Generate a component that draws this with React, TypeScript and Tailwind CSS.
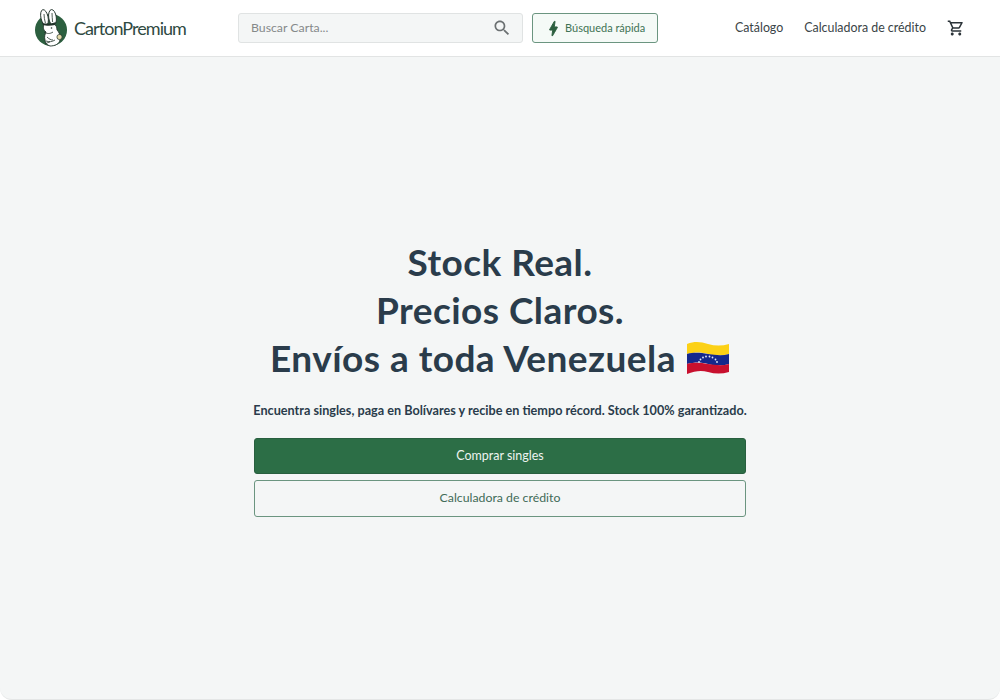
function Logo() {
  return (
    <svg width="34" height="38" viewBox="0 0 34 38" className="shrink-0">
      <circle cx="17" cy="21" r="16" fill="#2c5f3f" />
      <ellipse cx="10.5" cy="8.5" rx="3.6" ry="8" transform="rotate(-12 10.5 8.5)" fill="#fff" stroke="#22332b" strokeWidth="0.9" />
      <ellipse cx="18.5" cy="8.5" rx="3.8" ry="8" transform="rotate(-8 18.5 8.5)" fill="#fff" stroke="#22332b" strokeWidth="0.9" />
      <path d="M10 5c0 3 .6 6 1.4 9M18 4c0 3 .4 6 .6 9" stroke="#22332b" strokeWidth="0.8" fill="none" />
      <path d="M10 15c-1 3-1 6 2 8-1 2-2 5-1 8 0 3 2 5 5 6 5 0 9-2 10-6 1-4-1-8-3-10 0-3-1-5-3-6Z" fill="#fff" stroke="#22332b" strokeWidth="0.9" />
      <path d="M8 14c4 2 9 1 14-1l-1 3c-4 1-9 1-12 0Z" fill="#22332b" />
      <circle cx="17.5" cy="19" r="0.8" fill="#22332b" />
      <path d="M10 23c3 2 6 2 9 0M12 32c3 1 6 1 9-1M13 28c2 2 4 3 6 3M11 35c2-1 4-2 5-2" stroke="#22332b" strokeWidth="0.8" fill="none" />
      <circle cx="25.5" cy="28" r="2.6" fill="#e4d9a8" stroke="#22332b" strokeWidth="0.7" />
    </svg>
  );
}

function Flag() {
  return (
    <svg width="44" height="33" viewBox="0 0 44 33" className="shrink-0">
      <path d="M1 2c8-3 14-2 21 0s14 2 21 0v10c-7 2-14 2-21 0S9 10 1 12Z" fill="#fcd116" />
      <path d="M1 12c8-2 14-1 21 0s14 2 21 0v10c-7 2-14 2-21 0S9 20 1 22Z" fill="#14288c" />
      <path d="M1 22c8-2 14-1 21 0s14 2 21 0v8c-7 2-14 2-21 0S9 29 1 32Z" fill="#c8102e" />
      {[[13,20],[14.5,17.5],[17,15.5],[20,14.5],[23.5,14.5],[26.5,15.5],[29.5,17.5],[31,20]].map(([x,y],i)=>(
        <circle key={i} cx={x} cy={y} r="0.9" fill="#dfe6f5" />
      ))}
    </svg>
  );
}

const icon = {
  search: "M15.5 14h-.79l-.28-.27C15.41 12.59 16 11.11 16 9.5 16 5.91 13.09 3 9.5 3S3 5.91 3 9.5 5.91 16 9.5 16c1.61 0 3.09-.59 4.23-1.57l.27.28v.79l5 4.99L20.49 19l-4.99-5zm-6 0C7.01 14 5 11.99 5 9.5S7.01 5 9.5 5 14 7.01 14 9.5 11.99 14 9.5 14z",
  bolt: "M11 21h-1l1-7H7.5c-.58 0-.57-.32-.38-.66.19-.34.05-.08.07-.12C8.48 10.94 10.42 7.54 13 3h1l-1 7h3.5c.49 0 .56.33.47.51l-.07.15C12.96 17.55 11 21 11 21z",
  cart: "M15.55 13c.75 0 1.41-.41 1.75-1.03l3.58-6.49c.37-.66-.11-1.48-.87-1.48H5.21l-.94-2H1v2h2l3.6 7.59-1.35 2.44C4.52 15.37 5.48 17 7 17h12v-2H7l1.1-2h7.45zM6.16 6h12.15l-2.76 5H8.53L6.16 6zM7 18c-1.1 0-1.99.9-1.99 2S5.9 22 7 22s2-.9 2-2-.9-2-2-2zm10 0c-1.1 0-1.99.9-1.99 2s.89 2 1.99 2 2-.9 2-2-.9-2-2-2z",
};

function Icon({ d, size, color, bold }: { d: string; size: number; color: string; bold?: boolean }) {
  return (
    <svg width={size} height={size} viewBox="0 0 24 24" fill={color} stroke={bold ? color : "none"} strokeWidth={bold ? 1.2 : 0} className="shrink-0">
      <path d={d} />
    </svg>
  );
}

export default function App() {
  return (
    <div className="h-[700px] w-[1000px] bg-white overflow-hidden font-['Lato',sans-serif]">
      <header className="h-[57px] bg-white border-b border-[#e2e4e4] flex items-center pl-[34px]">
        <Logo />
        <span className="ml-[6px] w-[158px] text-[18px] tracking-[-0.95px] text-[#2f4a42]">CartonPremium</span>
        <div className="ml-[6px] w-[285px] h-[30px] rounded-[3px] border border-[#e0e3e3] bg-[#f4f6f6] flex items-center pl-3 pr-[10px]">
          <span className="flex-1 text-[12.3px] text-[#85898a]">Buscar Carta...</span>
          <Icon d={icon.search} size={20} color="#6b7072" />
        </div>
        <div className="ml-[9px] w-[126px] h-[30px] rounded-[3px] border border-[#6b9580] bg-[#f5faf7] flex items-center pl-[11px] gap-[2px]">
          <Icon d={icon.bolt} size={19} color="#2c5f3f" bold />
          <span className="text-[11px] text-[#3f7355]">Búsqueda rápida</span>
        </div>
        <nav className="ml-[77px] flex items-center text-[12.4px] text-[#3a4447]">
          <span>Catálogo</span>
          <span className="ml-[21px]">Calculadora de crédito</span>
          <span className="ml-[21px]"><Icon d={icon.cart} size={18} color="#2b3338" /></span>
        </nav>
      </header>
      <main className="h-[643px] bg-[#f4f6f6] rounded-b-[12px] border-b border-[#e4e6e6] flex flex-col items-center pt-[181px]">
        <h1 className="text-[37px] leading-[48px] tracking-[0.45px] font-bold text-[#2a3c4b] text-center">
          <div>Stock Real.</div>
          <div>Precios Claros.</div>
          <div className="flex items-center justify-center gap-[10px]">Envíos a toda Venezuela <Flag /></div>
        </h1>
        <p className="mt-[19px] text-[12.65px] leading-[20px] font-bold text-[#2a3c4b]">
          Encuentra singles, paga en Bolívares y recibe en tiempo récord. Stock 100% garantizado.
        </p>
        <button className="mt-[17px] w-[492px] h-[36px] rounded-[3px] bg-[#2c6e46] border border-[#285f3f] text-[12.5px] text-[#eef4f0]">Comprar singles</button>
        <button className="mt-[6px] w-[492px] h-[37px] rounded-[3px] border border-[#6b9580] text-[12.3px] text-[#3f6b57]">Calculadora de crédito</button>
      </main>
    </div>
  );
}
